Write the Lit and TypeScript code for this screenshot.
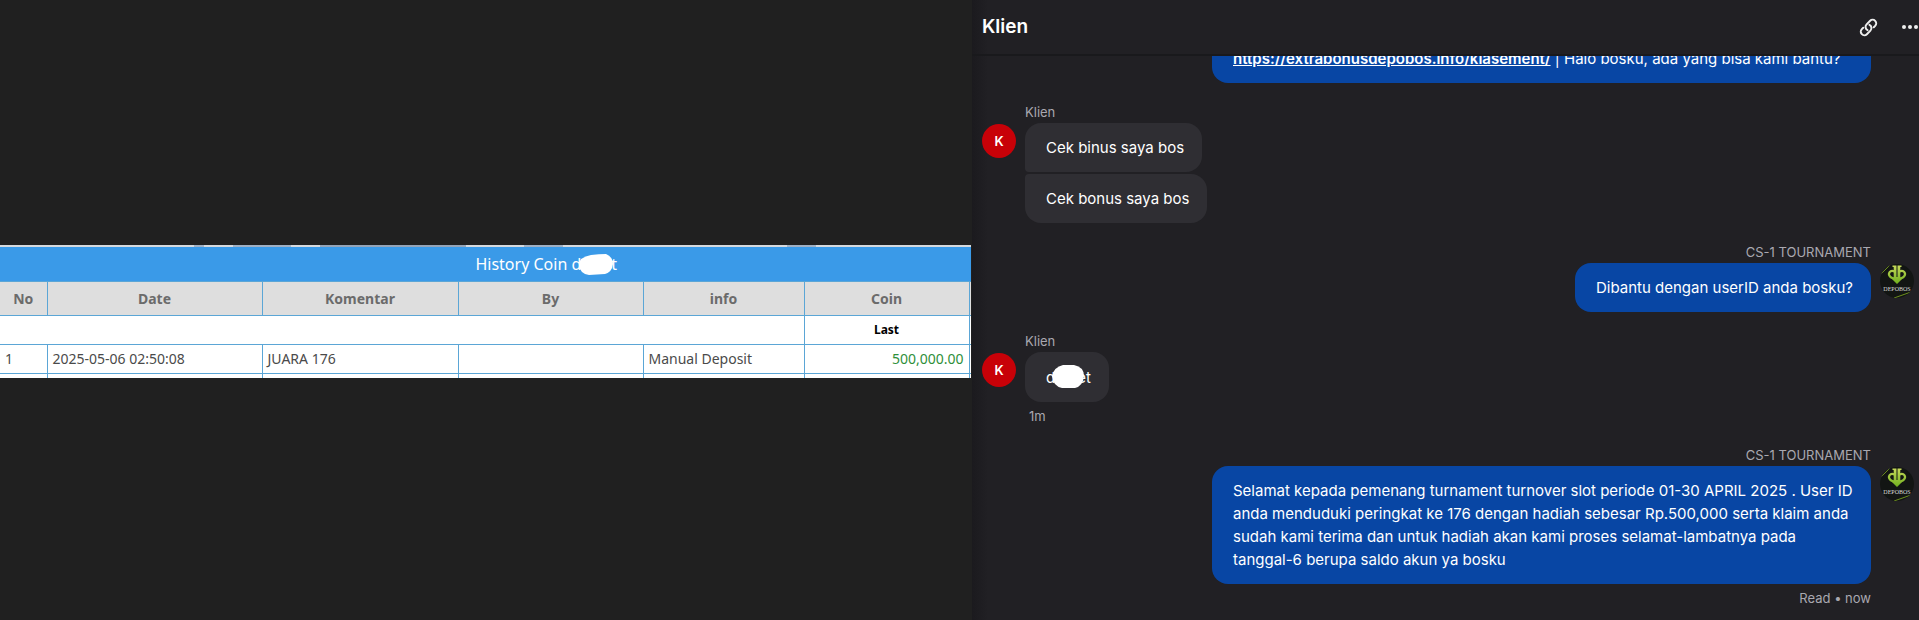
import { LitElement, html, css } from "lit";
import { customElement, property } from "lit/decorators.js";

const FONT = css`Inter, "Liberation Sans", sans-serif`;

@customElement("history-table")
class HistoryTable extends LitElement {
  static styles = css`
    :host {
      display: block;
      overflow: hidden;
      font-family: "Noto Sans", "Open Sans", sans-serif;
      background: #fff;
    }
    .strip {
      height: 2px;
      background: linear-gradient(90deg,
        #d5d9de 0 20%, #9fb0c4 20% 21%, #d5d9de 21% 24%, #9fb0c4 24% 30%,
        #d5d9de 30% 33%, #94a4b8 33% 48%, #d5d9de 48% 54%, #9fb0c4 54% 58%,
        #d5d9de 58% 81%, #9fb0c4 81% 84%, #d5d9de 84%);
    }
    table {
      width: 112%;
      table-layout: fixed;
      border-collapse: collapse;
      color: #4a4a4a;
      font-size: 14px;
      line-height: 20px;
    }
    caption {
      height: 34px;
      padding-left: 5px;
      line-height: 34px;
      background: #3a9ae8;
      color: #fff;
      font-size: 16px;
    }
    .c-no { width: 47px; }
    .c-date { width: 215px; }
    .c-note { width: 196px; }
    .c-by { width: 185px; }
    .c-info { width: 161px; }
    .c-coin { width: 165px; }
    th, td {
      border: 1px solid #5ba6d6;
      padding: 0 5px;
    }
    th:first-child, td:first-child { border-left: 0; }
    thead th {
      height: 33px;
      background: #dedede;
      color: #6b6b6b;
    }
    .sub td, .sub th { height: 28px; }
    .sub th {
      color: #000;
      font-size: 12px;
    }
    .row td { height: 28px; }
    .row .amount {
      text-align: right;
      color: #2f8f3a;
    }
    .next td {
      height: 4px;
      padding: 0;
      border-bottom: 0;
    }
    .blob {
      width: 34px;
      height: 21px;
      margin: 0 -2px;
      vertical-align: -5px;
      position: relative;
    }
  `;

  render() {
    return html`
      <div class="strip"></div>
      <table>
        <caption>History Coin d<svg class="blob" viewBox="0 0 34 21"><path d="M12 1 Q20 0 27 0 Q34 3 34 10 Q33 18 26 20 L10 21 Q1 20 0 11 Q0 3 12 1Z" fill="#fff"/></svg>t</caption>
        <colgroup>
          <col class="c-no"><col class="c-date"><col class="c-note"><col class="c-by"><col class="c-info"><col class="c-coin"><col>
        </colgroup>
        <thead>
          <tr>
            ${["No", "Date", "Komentar", "By", "info", "Coin"].map((h) => html`<th scope="col">${h}</th>`)}
            <th></th>
          </tr>
        </thead>
        <tbody>
          <tr class="sub"><td colspan="5"></td><th>Last</th><td></td></tr>
          <tr class="row">
            <td>1</td><td>2025-05-06 02:50:08</td><td>JUARA 176</td><td></td>
            <td>Manual Deposit</td><td class="amount">500,000.00</td><td></td>
          </tr>
          <tr class="next"><td></td><td></td><td></td><td></td><td></td><td></td><td></td></tr>
        </tbody>
      </table>
    `;
  }
}

@customElement("chat-avatar")
class ChatAvatar extends LitElement {
  @property() kind = "client";

  static styles = css`
    :host { display: block; width: 34px; height: 34px; }
    .letter {
      width: 34px;
      height: 34px;
      border-radius: 50%;
      background: #c80108;
      color: #fff;
      font: 600 13px/34px ${FONT};
      text-align: center;
    }
    svg { display: block; width: 34px; height: 34px; }
    .brand {
      font: 400 6px "Liberation Serif", serif;
      fill: #d8d8d8;
    }
  `;

  render() {
    if (this.kind === "client") return html`<div class="letter">K</div>`;
    return html`
      <svg viewBox="0 0 34 34" role="img" aria-label="DEPOBOS">
        <defs>
          <clipPath id="disc"><circle cx="17" cy="17" r="17"/></clipPath>
          <linearGradient id="leaf" gradientUnits="userSpaceOnUse" x1="0" y1="1" x2="0" y2="20">
            <stop offset="0" stop-color="#c9da5c"/><stop offset="1" stop-color="#6fb01e"/>
          </linearGradient>
        </defs>
        <g clip-path="url(#disc)">
          <rect width="34" height="34" fill="#121513"/>
          <path d="M1 10 L10 1 M14 34 L31 28 M22 35 L34 30" stroke="#6d8f1f" stroke-width="1"/>
          <path d="M14.500 7.500 C10 5.500 7.500 9.500 10 12.500 C11.500 14.500 14 14.500 14.800 14 M19.500 7.500 C24 5.500 26.500 9.500 24 12.500 C22.500 14.500 20 14.500 19.200 14" fill="none" stroke="url(#leaf)" stroke-width="2.200"/>
          <path d="M12.500 1.500 H16.500 V13 H17.500 V1.500 H21.500 V3 H20.300 V14.500 H22.500 L17 20 L11.500 14.500 H13.700 V3 H12.500Z" fill="url(#leaf)"/>
          <text class="brand" x="17" y="27" text-anchor="middle">DEPOBOS</text>
        </g>
      </svg>
    `;
  }
}

@customElement("chat-panel")
class ChatPanel extends LitElement {
  static styles = css`
    :host {
      display: flex;
      flex-direction: column;
      min-width: 0;
      height: 100%;
      background: linear-gradient(90deg, #1b1a1e, #212024 16px);
      color: #fff;
      font-family: ${FONT};
    }
    header {
      display: flex;
      align-items: center;
      flex: none;
      height: 54px;
      padding-left: 10px;
      border-bottom: 2px solid #19191c;
    }
    h1 {
      flex: 1;
      margin: 0;
      font-size: 19px;
      line-height: 24px;
      font-weight: 600;
    }
    button {
      display: block;
      padding: 0;
      border: 0;
      background: none;
      color: #eee;
    }
    .link { margin-right: 24px; }
    button svg { display: block; }
    .log {
      flex: 1;
      min-height: 0;
      overflow: hidden;
      display: flex;
      flex-direction: column;
      justify-content: flex-end;
      padding: 0 5px 12px 10px;
    }
    .group {
      flex: none;
      display: grid;
      grid-template-columns: 34px minmax(0, 1fr);
      column-gap: 9px;
      margin-top: 19px;
    }
    .group.out {
      grid-template-columns: minmax(0, 1fr) 34px;
      justify-items: end;
    }
    .name, .meta {
      grid-column: 2;
      color: #a9a8b0;
      font-size: 13px;
      line-height: 20px;
    }
    .name { padding-bottom: 1px; }
    .out .name, .out .meta { grid-column: 1; }
    .meta { padding: 4px 4px 0; }
    .out .meta { padding: 4px 0 0; }
    chat-avatar { grid-column: 1; grid-row: 2; margin-top: 1px; }
    .out chat-avatar { grid-column: 2; }
    .stack {
      grid-column: 2;
      display: flex;
      flex-direction: column;
      align-items: flex-start;
      gap: 2px;
    }
    .out .stack { grid-column: 1; grid-row: 2; }
    .bubble {
      padding: 13px 18px 13px 21px;
      border-radius: 16px;
      background: #2f2e33;
      font-size: 15px;
      line-height: 23px;
      max-width: 620px;
    }
    .long { width: 620px; }
    .out .bubble { background: #0846a4; }
    .first { border-bottom-left-radius: 4px; }
    .last { border-top-left-radius: 4px; }
    a { color: #fff; font-weight: 600; }
    .blob {
      width: 32px;
      height: 23px;
      margin: 0 -7px 0 -3px;
      vertical-align: -5px;
      position: relative;
    }
  `;

  render() {
    return html`
      <header>
        <h1>Klien</h1>
        <button class="link" aria-label="Copy link">
          <svg width="19" height="19" viewBox="0 0 24 24" fill="none" stroke="currentColor" stroke-width="2.5" stroke-linecap="round" stroke-linejoin="round">
            <path d="M13.190 8.688a4.500 4.500 0 0 1 1.242 7.244l-4.500 4.500a4.500 4.500 0 0 1-6.364-6.364l1.757-1.757m13.350-.622 1.757-1.757a4.500 4.500 0 0 0-6.364-6.364l-4.500 4.500a4.500 4.500 0 0 0 1.242 7.244"/>
          </svg>
        </button>
        <button aria-label="More">
          <svg width="17" height="18" viewBox="0 0 17 18" fill="currentColor">
            <circle cx="2" cy="9" r="2"/><circle cx="8" cy="9" r="2"/><circle cx="14" cy="9" r="2"/>
          </svg>
        </button>
      </header>
      <div class="log">
        <div class="group out">
          <div class="stack"><div class="bubble long"><a href="https://extrabonusdepobos.info/klasement/">https://extrabonusdepobos.info/klasement/</a> | Halo bosku, ada yang bisa kami bantu?</div></div>
        </div>
        <div class="group">
          <div class="name">Klien</div>
          <chat-avatar></chat-avatar>
          <div class="stack">
            <div class="bubble first">Cek binus saya bos</div>
            <div class="bubble last">Cek bonus saya bos</div>
          </div>
        </div>
        <div class="group out">
          <div class="name">CS-1 TOURNAMENT</div>
          <div class="stack"><div class="bubble">Dibantu dengan userID anda bosku?</div></div>
          <chat-avatar kind="agent"></chat-avatar>
        </div>
        <div class="group">
          <div class="name">Klien</div>
          <chat-avatar></chat-avatar>
          <div class="stack"><div class="bubble">d<svg class="blob" viewBox="0 0 32 23"><path d="M11 0 H22 Q32 2 32 11 Q31 21 23 23 H10 Q1 21 0 11 Q2 2 11 0Z" fill="#fff"/></svg>et</div></div>
          <div class="meta">1m</div>
        </div>
        <div class="group out">
          <div class="name">CS-1 TOURNAMENT</div>
          <div class="stack"><div class="bubble">Selamat kepada pemenang turnament turnover slot periode 01-30 APRIL 2025 . User ID anda menduduki peringkat ke 176 dengan hadiah sebesar Rp.500,000 serta klaim anda sudah kami terima dan untuk hadiah akan kami proses selamat-lambatnya pada tanggal-6 berupa saldo akun ya bosku</div></div>
          <chat-avatar kind="agent"></chat-avatar>
          <div class="meta">Read • now</div>
        </div>
      </div>
    `;
  }
}

@customElement("app-root")
class AppRoot extends LitElement {
  static styles = css`
    :host {
      display: grid;
      grid-template-columns: 972fr 947fr;
      grid-template-rows: 100%;
      height: 100vh;
      background: #202020;
    }
    .preview {
      display: flex;
      flex-direction: column;
      justify-content: center;
      min-width: 0;
      padding: 3px 1px 0 0;
    }
  `;

  render() {
    return html`
      <div class="preview"><history-table></history-table></div>
      <chat-panel></chat-panel>
    `;
  }
}
